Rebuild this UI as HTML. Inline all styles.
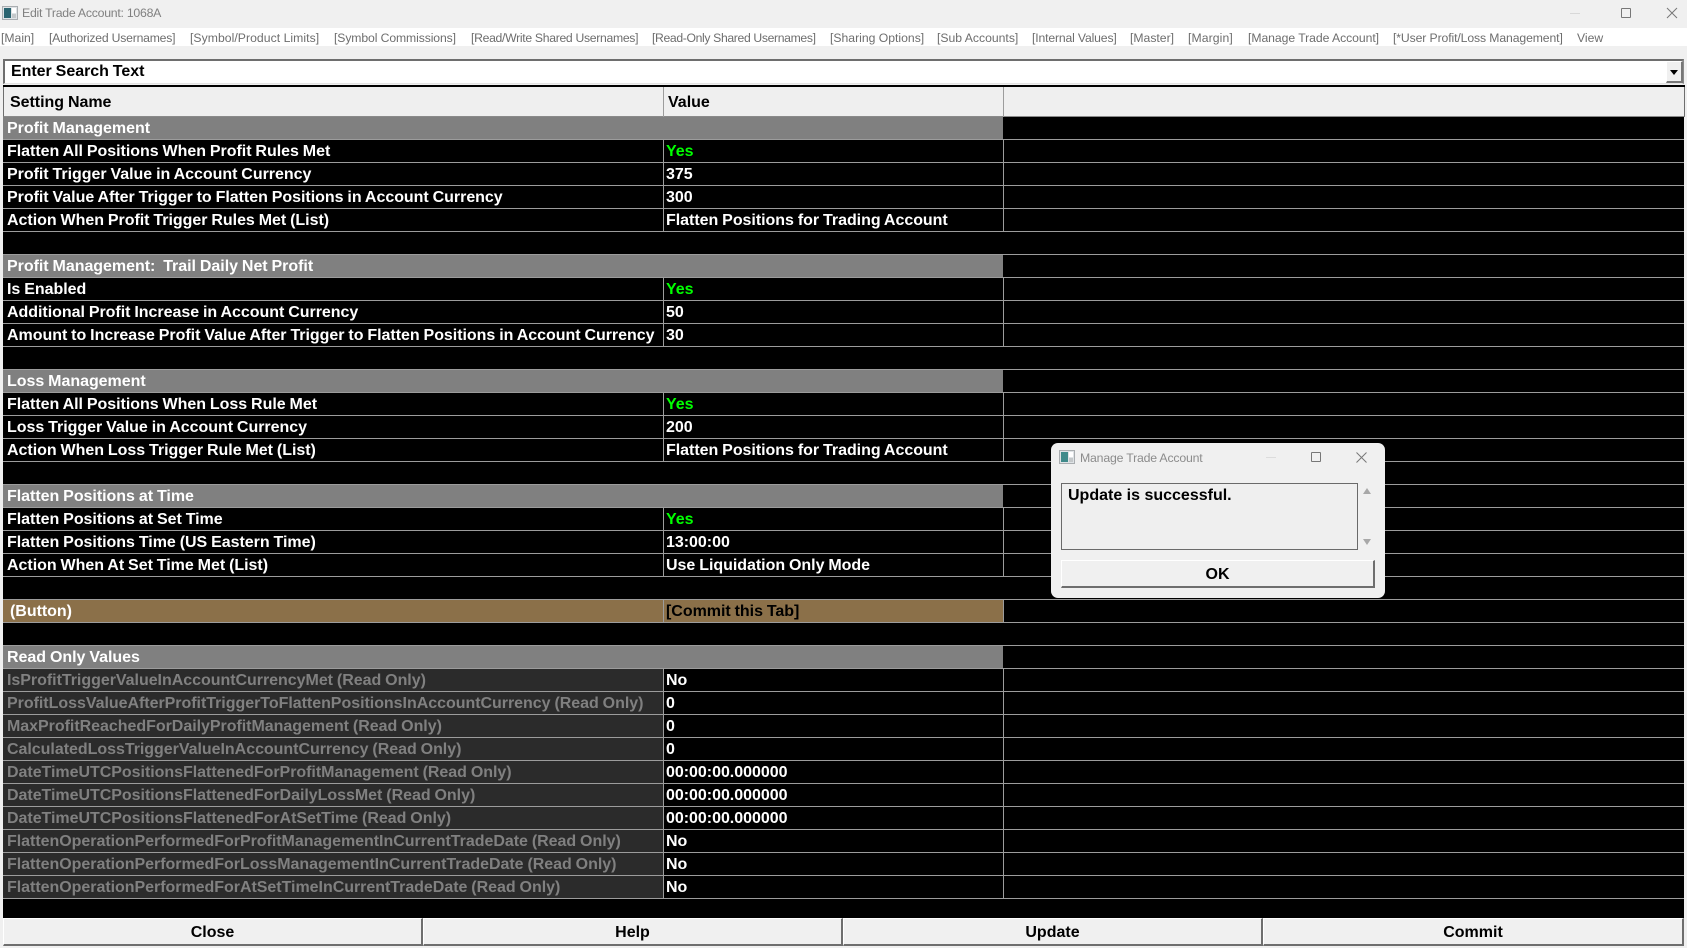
<!DOCTYPE html>
<html><head><meta charset="utf-8"><title>Edit Trade Account: 1068A</title>
<style>
html,body{margin:0;padding:0;width:1687px;height:948px;overflow:hidden;background:#f0f0f0;font-family:"Liberation Sans",Arial,sans-serif}
.a{position:absolute}
.m{position:absolute;top:28px;height:18px;line-height:21px;font-size:12.2px;color:#6e6e6e;white-space:nowrap}
#grid{position:absolute;left:3px;top:117px;width:1681px;height:782px;background:#000}
.r{position:relative;height:23px;box-sizing:border-box;border-bottom:1px solid #9c9c9c;font-weight:bold;font-size:16px;line-height:23px;letter-spacing:-.03px;word-spacing:-.48px;color:#fff;white-space:nowrap}
.r span{position:absolute;top:0;height:22px}
.n{left:4px}
.v{left:660px;width:340px;box-sizing:border-box;padding-left:2px;border-left:1px solid #9c9c9c;}
.v::after{content:"";position:absolute;left:339px;top:0;width:1px;height:22px;background:#9c9c9c}
.r span.v{width:340px}
.g .bar{position:absolute;left:0;top:0;width:1000px;height:22px;background:#808080}
.g span{left:4px;color:#fff}
.ro .bar{position:absolute;left:0;top:0;width:660px;height:22px;background:#2b2b2b}
.ro .n{color:#808080}
.y{color:#00ff00}
.b .bar{position:absolute;left:0;top:0;width:1000px;height:22px;background:#8b7049}
.b .n{left:7px;color:#fff}
.b .v{color:#000}
.btn{position:absolute;top:918px;height:28px;box-sizing:border-box;background:#f0f0f0;border-top:1px solid #fff;border-left:1px solid #fff;border-right:2px solid #6e6e6e;border-bottom:2px solid #6e6e6e;text-align:center;font-weight:bold;font-size:16px;line-height:28px;color:#000}
</style></head>
<body>
<svg class="a" style="left:2px;top:6px" width="16" height="14" viewBox="0 0 16 14"><rect x=".5" y=".5" width="15" height="13" fill="#dfe3e6" stroke="#a9adb0"/><rect x="2" y="2" width="7" height="10" fill="#2a6470"/><rect x="10" y="2" width="4" height="5" fill="#fff"/><rect x="10" y="8" width="4" height="4" fill="#c4c8ca"/></svg>
<div class="a" style="left:22px;top:4px;font-size:12.3px;letter-spacing:-.26px;line-height:18px;color:#808080;white-space:nowrap">Edit Trade Account: 1068A</div>
<div class="a" style="left:1570px;top:13px;width:10px;height:1px;background:#d8d8d8"></div>
<div class="a" style="left:1621px;top:8px;width:8px;height:8px;border:1px solid #777;border-radius:1px"></div>
<svg class="a" style="left:1666px;top:7px" width="12" height="12" viewBox="0 0 12 12"><path d="M1 1 L11 11 M11 1 L1 11" stroke="#777" stroke-width="1"/></svg>

<div class="a" style="left:0;top:28px;width:1687px;height:18px;background:#fff"></div>
<div class="m" style="left:1px">[Main]</div>
<div class="m" style="left:49px;letter-spacing:-.2px">[Authorized Usernames]</div>
<div class="m" style="left:190px;letter-spacing:.05px">[Symbol/Product Limits]</div>
<div class="m" style="left:334px;letter-spacing:-.1px">[Symbol Commissions]</div>
<div class="m" style="left:471px;letter-spacing:-.3px">[Read/Write Shared Usernames]</div>
<div class="m" style="left:652px;letter-spacing:-.35px">[Read-Only Shared Usernames]</div>
<div class="m" style="left:830px">[Sharing Options]</div>
<div class="m" style="left:937px">[Sub Accounts]</div>
<div class="m" style="left:1032px;letter-spacing:-.15px">[Internal Values]</div>
<div class="m" style="left:1130px">[Master]</div>
<div class="m" style="left:1188px;letter-spacing:.1px">[Margin]</div>
<div class="m" style="left:1248px;letter-spacing:-.05px">[Manage Trade Account]</div>
<div class="m" style="left:1393px;letter-spacing:-.1px">[*User Profit/Loss Management]</div>
<div class="m" style="left:1577px">View</div>

<div class="a" style="left:3px;top:59px;width:1681px;height:25px;box-sizing:border-box;background:#fff;border-top:2px solid #6e6e6e;border-left:2px solid #6e6e6e;border-bottom:1px solid #e3e3e3;border-right:2px solid #8a8a8a"></div>
<div class="a" style="left:11px;top:62px;font-weight:bold;font-size:16px;letter-spacing:-.03px;word-spacing:-.48px;line-height:20px;color:#000;white-space:nowrap">Enter Search Text</div>
<div class="a" style="left:1666px;top:61px;width:17px;height:22px;box-sizing:border-box;background:#f0f0f0;border-top:1px solid #fff;border-left:1px solid #fff;border-right:2px solid #777;border-bottom:2px solid #777"></div>
<div class="a" style="left:1670px;top:70px;width:0;height:0;border-left:4px solid transparent;border-right:4px solid transparent;border-top:5px solid #000"></div>

<div class="a" style="left:3px;top:85px;width:1682px;height:2px;background:#000"></div>
<div class="a" style="left:3px;top:87px;width:1682px;height:30px;box-sizing:border-box;background:#efefef;border-left:1px solid #6e6e6e;border-right:1px solid #6e6e6e;border-bottom:1px solid #8a8a8a"></div>
<div class="a" style="left:663px;top:87px;width:1px;height:30px;background:#9c9c9c"></div>
<div class="a" style="left:1003px;top:87px;width:1px;height:30px;background:#9c9c9c"></div>
<div class="a" style="left:10px;top:93px;font-weight:bold;font-size:16px;letter-spacing:-.03px;word-spacing:-.48px;line-height:20px;color:#000">Setting Name</div>
<div class="a" style="left:668px;top:93px;font-weight:bold;font-size:16px;line-height:20px;color:#000">Value</div>

<div id="grid">
<div class="r g"><i class="bar"></i><span>Profit Management</span></div>
<div class="r"><span class="n">Flatten All Positions When Profit Rules Met</span><span class="v y">Yes</span></div>
<div class="r"><span class="n">Profit Trigger Value in Account Currency</span><span class="v">375</span></div>
<div class="r"><span class="n">Profit Value After Trigger to Flatten Positions in Account Currency</span><span class="v">300</span></div>
<div class="r"><span class="n">Action When Profit Trigger Rules Met (List)</span><span class="v">Flatten Positions for Trading Account</span></div>
<div class="r"></div>
<div class="r g"><i class="bar"></i><span>Profit Management:&nbsp; Trail Daily Net Profit</span></div>
<div class="r"><span class="n">Is Enabled</span><span class="v y">Yes</span></div>
<div class="r"><span class="n">Additional Profit Increase in Account Currency</span><span class="v">50</span></div>
<div class="r"><span class="n">Amount to Increase Profit Value After Trigger to Flatten Positions in Account Currency</span><span class="v">30</span></div>
<div class="r"></div>
<div class="r g"><i class="bar"></i><span>Loss Management</span></div>
<div class="r"><span class="n">Flatten All Positions When Loss Rule Met</span><span class="v y">Yes</span></div>
<div class="r"><span class="n">Loss Trigger Value in Account Currency</span><span class="v">200</span></div>
<div class="r"><span class="n">Action When Loss Trigger Rule Met (List)</span><span class="v">Flatten Positions for Trading Account</span></div>
<div class="r"></div>
<div class="r g"><i class="bar"></i><span>Flatten Positions at Time</span></div>
<div class="r"><span class="n">Flatten Positions at Set Time</span><span class="v y">Yes</span></div>
<div class="r"><span class="n">Flatten Positions Time (US Eastern Time)</span><span class="v">13:00:00</span></div>
<div class="r"><span class="n">Action When At Set Time Met (List)</span><span class="v">Use Liquidation Only Mode</span></div>
<div class="r"></div>
<div class="r b"><i class="bar"></i><span class="n">(Button)</span><span class="v">[Commit this Tab]</span></div>
<div class="r"></div>
<div class="r g"><i class="bar"></i><span>Read Only Values</span></div>
<div class="r ro"><i class="bar"></i><span class="n">IsProfitTriggerValueInAccountCurrencyMet (Read Only)</span><span class="v">No</span></div>
<div class="r ro"><i class="bar"></i><span class="n">ProfitLossValueAfterProfitTriggerToFlattenPositionsInAccountCurrency (Read Only)</span><span class="v">0</span></div>
<div class="r ro"><i class="bar"></i><span class="n">MaxProfitReachedForDailyProfitManagement (Read Only)</span><span class="v">0</span></div>
<div class="r ro"><i class="bar"></i><span class="n">CalculatedLossTriggerValueInAccountCurrency (Read Only)</span><span class="v">0</span></div>
<div class="r ro"><i class="bar"></i><span class="n">DateTimeUTCPositionsFlattenedForProfitManagement (Read Only)</span><span class="v">00:00:00.000000</span></div>
<div class="r ro"><i class="bar"></i><span class="n">DateTimeUTCPositionsFlattenedForDailyLossMet (Read Only)</span><span class="v">00:00:00.000000</span></div>
<div class="r ro"><i class="bar"></i><span class="n">DateTimeUTCPositionsFlattenedForAtSetTime (Read Only)</span><span class="v">00:00:00.000000</span></div>
<div class="r ro"><i class="bar"></i><span class="n">FlattenOperationPerformedForProfitManagementInCurrentTradeDate (Read Only)</span><span class="v">No</span></div>
<div class="r ro"><i class="bar"></i><span class="n">FlattenOperationPerformedForLossManagementInCurrentTradeDate (Read Only)</span><span class="v">No</span></div>
<div class="r ro"><i class="bar"></i><span class="n">FlattenOperationPerformedForAtSetTimeInCurrentTradeDate (Read Only)</span><span class="v">No</span></div>
</div>
<div class="a" style="left:3px;top:899px;width:1681px;height:19px;background:#000"></div>

<div class="btn" style="left:3px;width:420px">Close</div>
<div class="btn" style="left:423px;width:420px">Help</div>
<div class="btn" style="left:843px;width:420px">Update</div>
<div class="btn" style="left:1263px;width:421px">Commit</div>

<div class="a" style="left:1051px;top:443px;width:334px;height:155px;background:#f0f0f0;border-radius:7px"></div>
<svg class="a" style="left:1059px;top:450px" width="16" height="14" viewBox="0 0 16 14"><rect x=".5" y=".5" width="15" height="13" fill="#dfe3e6" stroke="#a9adb0"/><rect x="2" y="2" width="7" height="10" fill="#3f8a8a"/><rect x="10" y="2" width="4" height="5" fill="#fff"/><rect x="10" y="8" width="4" height="4" fill="#c4c8ca"/></svg>
<div class="a" style="left:1080px;top:449px;font-size:12.3px;letter-spacing:-.2px;line-height:18px;color:#8c8c8c;white-space:nowrap">Manage Trade Account</div>
<div class="a" style="left:1266px;top:457px;width:10px;height:1px;background:#dcdcdc"></div>
<div class="a" style="left:1311px;top:452px;width:8px;height:8px;border:1px solid #777;border-radius:1px"></div>
<svg class="a" style="left:1356px;top:452px" width="11" height="11" viewBox="0 0 11 11"><path d="M.5 .5 L10.5 10.5 M10.5 .5 L.5 10.5" stroke="#777" stroke-width="1"/></svg>
<div class="a" style="left:1061px;top:483px;width:297px;height:67px;box-sizing:border-box;background:#efefef;border:1px solid #6a6a6a"></div>
<div class="a" style="left:1068px;top:486px;font-weight:bold;font-size:16px;line-height:20px;color:#000;white-space:nowrap">Update is successful.</div>
<div class="a" style="left:1363px;top:488px;width:0;height:0;border-left:4.5px solid transparent;border-right:4.5px solid transparent;border-bottom:6px solid #a8a8a8"></div>
<div class="a" style="left:1363px;top:539px;width:0;height:0;border-left:4.5px solid transparent;border-right:4.5px solid transparent;border-top:6px solid #a8a8a8"></div>
<div class="a" style="left:1061px;top:560px;width:314px;height:28px;box-sizing:border-box;background:#f0f0f0;border-top:1px solid #fff;border-left:1px solid #fff;border-right:2px solid #6e6e6e;border-bottom:2px solid #6e6e6e;text-align:center;font-weight:bold;font-size:16px;line-height:27px;color:#000">OK</div>
</body></html>
